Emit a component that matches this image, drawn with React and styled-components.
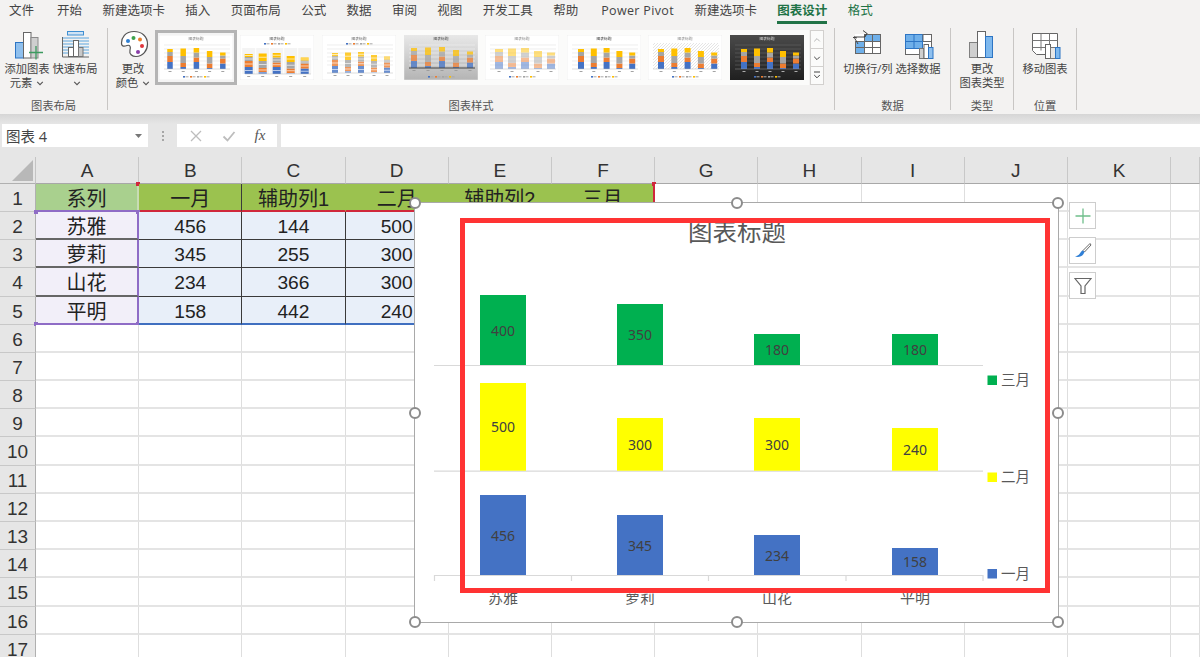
import styled, { createGlobalStyle } from "styled-components";

const uiFont = `"Open Sans", "Noto Sans CJK SC", sans-serif`;
const sheetFont = `"Liberation Sans", "Noto Sans CJK SC", sans-serif`;

const GlobalStyle = createGlobalStyle`
    html, body {
        margin: 0;
        padding: 0;
        background: #fff;
        overflow: hidden;
    }
`;

const Page = styled.div`
    width: 1200px;
    height: 657px;
    overflow: hidden;
    display: flex;
    flex-direction: column;
    font-family: ${uiFont};
    background: #f3f2f1;
`;

const TabBar = styled.div`
    height: 22px;
    flex: none;
    display: flex;
    gap: 20.4px;
    padding-left: 9px;
    box-sizing: border-box;
`;

const Tab = styled.div`
    position: relative;
    font-size: 12.5px;
    line-height: 21px;
    white-space: nowrap;
    color: ${(p) => (p.$green ? "#217346" : "#444")};
    font-weight: ${(p) => (p.$active ? 700 : 400)};
    letter-spacing: ${(p) => (p.$latin ? "0.35px" : "0")};
    &:first-child {
        margin-right: 2.6px;
    }
    &:nth-child(11) {
        margin-right: 2.6px;
    }
    ${(p) =>
        p.$active &&
        `&::after {
            content: "";
            position: absolute;
            left: 0;
            right: 0;
            bottom: -2px;
            height: 3px;
            background: #217346;
        }`}
`;

const Ribbon = styled.div`
    height: 92px;
    flex: none;
    display: flex;
`;

const Group = styled.div`
    width: ${(p) => p.$width}px;
    flex: none;
    display: flex;
    flex-direction: column;
    box-sizing: border-box;
`;

const GroupBody = styled.div`
    flex: 1;
    display: flex;
    padding-left: ${(p) => p.$pad || 0}px;
`;

const GroupLabel = styled.div`
    height: 16px;
    font-size: 11.3px;
    line-height: 16px;
    text-align: center;
    color: #555;
`;

const Separator = styled.div`
    width: 1px;
    flex: none;
    margin: 6px 0 4px;
    background: #c8c6c4;
`;

const RibbonButton = styled.div`
    width: ${(p) => p.$width}px;
    flex: none;
    padding-top: 8px;
    display: flex;
    flex-direction: column;
    align-items: center;
    font-size: 11.3px;
    line-height: 14px;
    color: #444;
    white-space: nowrap;
    svg.icon {
        display: block;
        margin-bottom: 2px;
    }
`;

const Gallery = styled.div`
    width: 654px;
    height: 55px;
    margin-top: 8px;
    flex: none;
    display: flex;
    background: #fbfbfa;
`;

const GallerySlot = styled.div`
    width: 81.6px;
    flex: none;
    display: flex;
    align-items: center;
    justify-content: center;
    box-sizing: border-box;
    svg {
        filter: blur(0.35px);
    }
    ${(p) => p.$selected && "border: 3px solid #b4b4b4; background: #f4f4f4;"}
`;

const ScrollColumn = styled.div`
    width: 14px;
    margin: 8px 0 0 1px;
    height: 55px;
    flex: none;
    display: flex;
    flex-direction: column;
    border: 1px solid #d2d0ce;
    box-sizing: border-box;
    background: #fbfbfa;
`;

const ScrollButton = styled.div`
    flex: 1;
    display: flex;
    align-items: center;
    justify-content: center;
    color: ${(p) => (p.$muted ? "#b5b5b5" : "#444")};
    & + & {
        border-top: 1px solid #d2d0ce;
    }
`;

const FormulaBar = styled.div`
    height: 43px;
    flex: none;
    display: flex;
    align-items: flex-start;
    box-sizing: border-box;
    padding: 10px 0 0 2px;
    background: linear-gradient(#d6d6d6 0, #e6e6e6 10px);
`;

const NameBox = styled.div`
    width: 146px;
    height: 23px;
    box-sizing: border-box;
    padding: 0 6px 0 4px;
    display: flex;
    align-items: center;
    justify-content: space-between;
    background: #fff;
    font-size: 14.5px;
    color: #444;
`;

const Dots = styled.div`
    width: 29px;
    height: 23px;
    flex: none;
    display: flex;
    flex-direction: column;
    align-items: center;
    justify-content: center;
    gap: 2px;
    span {
        width: 2px;
        height: 2px;
        background: #a6a6a6;
    }
`;

const FormulaButtons = styled.div`
    width: 100px;
    height: 23px;
    flex: none;
    display: flex;
    align-items: center;
    justify-content: space-around;
    padding: 0 2px;
    box-sizing: border-box;
    background: #fff;
`;

const Fx = styled.span`
    font-family: "Liberation Serif", serif;
    font-style: italic;
    font-size: 15px;
    color: #555;
`;

const FormulaInput = styled.div`
    flex: 1;
    height: 23px;
    margin-left: 4px;
    background: #fff;
`;

const Sheet = styled.div`
    position: relative;
    flex: 1;
    overflow: hidden;
    background: #fff;
    display: grid;
    grid-template-columns: 36px repeat(11, 103.2px) 1fr;
    grid-template-rows: 26.8px repeat(17, 28.2px);
    font-family: ${sheetFont};
`;

const CornerCell = styled.div`
    background: #e6e6e6;
    border-right: 1px solid #c4c4c4;
    border-bottom: 1px solid #b0b0b0;
    box-sizing: border-box;
    position: relative;
    &::after {
        content: "";
        position: absolute;
        left: 12px;
        top: 3px;
        width: 21px;
        height: 21px;
        background: #b8b8b8;
        clip-path: polygon(100% 0, 100% 100%, 0 100%);
    }
`;

const ColHeader = styled.div`
    background: #e6e6e6;
    border-right: 1px solid #c8c8c8;
    border-bottom: 1px solid #a8a8a8;
    box-sizing: border-box;
    font-size: 19px;
    line-height: 28px;
    text-align: center;
    color: #333;
`;

const RowHeader = styled.div`
    background: #e6e6e6;
    border-right: 1px solid #b0b0b0;
    border-bottom: 1px solid #c8c8c8;
    box-sizing: border-box;
    font-size: 19px;
    line-height: 30px;
    text-align: center;
    color: #333;
`;

const Cell = styled.div`
    position: relative;
    box-sizing: border-box;
    background: ${(p) => p.$bg || "#fff"};
    border-right: ${(p) => p.$right || "1px solid #dedede"};
    border-bottom: ${(p) => p.$bottom || "2px solid #e4e4e4"};
    font-size: ${(p) => (p.$cjk ? 20 : 19.2)}px;
    line-height: 30.5px;
    text-align: center;
    white-space: nowrap;
    color: #222;
`;

const Mark = styled.span`
    position: absolute;
    width: 4px;
    height: 4px;
    background: ${(p) => p.$color};
    ${(p) => (p.$atLeft ? "left: -2px;" : "right: -3px;")}
    ${(p) => (p.$atTop ? "top: -2px;" : "bottom: -3px;")}
`;

const ChartFrame = styled.div`
    position: absolute;
    left: 415px;
    top: 46px;
    width: 643px;
    height: 419px;
    box-sizing: border-box;
    background: #fff;
    outline: 1.5px solid #a9a9a9;
    svg {
        display: block;
    }
`;

const Annotation = styled.div`
    position: absolute;
    left: 45px;
    top: 15px;
    width: 590px;
    height: 375px;
    box-sizing: border-box;
    border: 5px solid #ff3333;
`;

const Handle = styled.span`
    position: absolute;
    width: 12px;
    height: 12px;
    margin: -6px 0 0 -6px;
    box-sizing: border-box;
    border-radius: 50%;
    background: #fff;
    border: 2px solid #8c8c8c;
    left: ${(p) => p.$x}%;
    top: ${(p) => p.$y}%;
`;

const SideButtons = styled.div`
    position: absolute;
    left: 1069px;
    top: 45px;
    display: flex;
    flex-direction: column;
    gap: 8px;
`;

const SideButton = styled.div`
    width: 27px;
    height: 27px;
    box-sizing: border-box;
    background: #fff;
    border: 1px solid #cdcdcd;
    display: flex;
    align-items: center;
    justify-content: center;
`;

function Caret({ size = 8, color = "#555" }) {
    return (
        <svg width={size} height={size} viewBox="0 0 8 8" style={{ marginLeft: 4 }}>
            <path d="M1.2 2.8 4 5.6l2.8-2.8" fill="none" stroke={color} strokeWidth="1.1" />
        </svg>
    );
}

function AddChartIcon() {
    return (
        <svg className="icon" width="48" height="30" viewBox="3 30 48 30">
            <rect x="15.5" y="42.5" width="8" height="15.5" fill="#8fc0ee" stroke="#2d75c4" />
            <rect x="23.5" y="32.5" width="7.5" height="25.5" fill="#fff" stroke="#666" />
            <rect x="31" y="37.5" width="7" height="20.5" fill="#cfcfcf" stroke="#8a8a8a" />
            <path d="M36 46v13.5M29 52.5h14" stroke="#3c9a5f" strokeWidth="1.3" />
        </svg>
    );
}

function QuickLayoutIcon() {
    return (
        <svg className="icon" width="48" height="30" viewBox="51 30 48 30">
            <rect x="67.5" y="31.5" width="16" height="3.5" fill="#cfe3f5" stroke="#3f8fd2" />
            {[38, 41, 44, 47, 50, 53].map((y) => (
                <path key={y} d={`M63 ${y}h26`} stroke="#5aa5de" strokeWidth="1" />
            ))}
            <path d="M62.5 37v20H89" fill="none" stroke="#666" />
            <rect x="68.5" y="47.5" width="5" height="9" fill="#fff" stroke="#666" />
            <rect x="73.5" y="40.5" width="5" height="16" fill="#fff" stroke="#666" />
            <rect x="78.5" y="47.5" width="4.5" height="9" fill="#c8c8c8" stroke="#777" />
        </svg>
    );
}

function PaletteIcon() {
    return (
        <svg className="icon" width="44" height="30" viewBox="111 30 44 30">
            <path
                d="M134 31.5C125 31.5 121.5 38 121.5 43c0 4 3 3.5 5.5 2.5 3-1 4 1.5 3 4.5-1 4 2 6.5 6 6.5 7 0 11.5-6 11.5-12.5 0-7.5-5.5-12.5-13.5-12.5Z"
                fill="#fff"
                stroke="#555"
                strokeWidth="1.2"
            />
            <circle cx="128" cy="41" r="2" fill="#2d7fd3" />
            <circle cx="133.5" cy="38" r="2" fill="#3fa34d" />
            <circle cx="140" cy="39.5" r="2" fill="#e8802c" />
            <circle cx="142" cy="46" r="2" fill="#e0353c" />
            <circle cx="138" cy="52" r="2" fill="#8a3fa8" />
        </svg>
    );
}

function SwitchRowColIcon() {
    return (
        <svg className="icon" width="50" height="30" viewBox="843 30 50 30">
            <rect x="855" y="34" width="26" height="20" fill="#fff" />
            <rect x="864" y="34" width="17" height="7" fill="#6fb0ea" />
            <rect x="855" y="41" width="9" height="13" fill="#6fb0ea" />
            <path
                d="M855.5 41.5h25M855.5 47.5h25M864.5 34v20M872.5 34v20M880.5 34v20M855.5 41v13M855 53.5h26M864 34.5h17"
                fill="none"
                stroke="#666"
            />
            <path d="M854 37h11l2-3.5M863 30.5l4 3-3 3.5M858 44l-4-7-1 1M854 37l3 1" fill="none" stroke="#444" strokeWidth="1" />
        </svg>
    );
}

function SelectDataIcon() {
    return (
        <svg className="icon" width="50" height="30" viewBox="893 30 50 30">
            <rect x="905.5" y="34.5" width="26" height="20" fill="#fff" stroke="#666" />
            <rect x="905.5" y="34.5" width="17" height="14" fill="#6fb0ea" stroke="#2d75c4" />
            <path d="M914 34v14M905.5 41.5h17" stroke="#2d75c4" />
            <path d="M923 41.5h9M923 34v7" stroke="#666" />
            <rect x="919.5" y="48.5" width="4.5" height="10" fill="#cfcfcf" stroke="#777" />
            <rect x="924" y="44.5" width="4.5" height="14" fill="#fff" stroke="#666" />
            <rect x="928.5" y="47.5" width="4.5" height="11" fill="#8fc0ee" stroke="#2d75c4" />
        </svg>
    );
}

function ChartTypeIcon() {
    return (
        <svg className="icon" width="62" height="30" viewBox="951 30 62 30">
            <rect x="969.5" y="42.5" width="8" height="15" fill="#cfcfcf" stroke="#808080" />
            <rect x="977.5" y="31.5" width="8" height="26" fill="#fff" stroke="#666" />
            <rect x="985.5" y="36.5" width="7" height="21" fill="#7db8ee" stroke="#2d75c4" />
        </svg>
    );
}

function MoveChartIcon() {
    return (
        <svg className="icon" width="62" height="30" viewBox="1014 30 62 30">
            <path d="M1032.5 33.5h25v21h-21l-4-4Z" fill="#fff" stroke="#666" />
            <path d="M1032.5 40.5h25M1032.5 47.5h25M1041 33.5v17M1049.5 33.5v12" stroke="#777" />
            <rect x="1045.5" y="44.5" width="5" height="14" fill="#fff" stroke="#666" />
            <rect x="1050.5" y="47.5" width="5" height="11" fill="#e6e6e6" stroke="#777" />
            <rect x="1055.5" y="47.5" width="4.5" height="11" fill="#7db8ee" stroke="#2d75c4" />
        </svg>
    );
}

const thumbStacks = [
    [7, 6, 4, 3],
    [2, 4, 7, 7.5],
    [7, 4.5, 5, 4.5],
    [1, 4.5, 6.5, 6],
    [5.5, 5, 3, 3],
];
const stackColors = ["#4472c4", "#ed7d31", "#a5a5a5", "#ffc000"];

const thumbStyles = [
    { grid: true, legend: 41, barWidth: 5.5, start: 11, step: 13.2, base: 34, titleColor: "#777" },
    { legend: 8, barWidth: 8, start: 8.7, step: 14, base: 39, panels: true, stripes: true, titleColor: "#555" },
    { grid: true, legend: 8, barWidth: 6, start: 13, step: 13, base: 38, stripes: true, pale: 0.8, titleColor: "#666" },
    { grid: true, legend: 41, barWidth: 6, start: 10, step: 14, base: 33, gray: true, pale: 0.75, axis: "#444", titleColor: "#444" },
    { grid: true, legend: 41, barWidth: 8, start: 14, step: 13, base: 34, pale: 0.5, titleColor: "#888" },
    { grid: true, legend: 41, barWidth: 6, start: 14, step: 12.8, base: 34, titleColor: "#333" },
    { legend: 41, barWidth: 6, start: 13, step: 13.3, base: 34, hatch: true, titleColor: "#888" },
    { grid: true, legend: 41, barWidth: 6, start: 14, step: 13, base: 34, dark: true, titleColor: "#ddd" },
];

function ChartThumb({ index }) {
    const look = thumbStyles[index];
    const bg = look.dark ? "url(#thumb-dark)" : look.gray ? "url(#thumb-gray)" : "#fff";
    const gridColor = look.dark ? "#666" : look.gray ? "#f2f2f2" : "#e3e3e3";

    return (
        <svg width="74" height="45" viewBox="0 0 74 45">
            <defs>
                <linearGradient id="thumb-dark" x1="0" y1="0" x2="0" y2="1">
                    <stop offset="0" stopColor="#4a4a4a" />
                    <stop offset="1" stopColor="#1f1f1f" />
                </linearGradient>
                <linearGradient id="thumb-gray" x1="0" y1="0" x2="0" y2="1">
                    <stop offset="0" stopColor="#e8e8e8" />
                    <stop offset="1" stopColor="#b4b4b4" />
                </linearGradient>
                <pattern id="thumb-hatch" width="3" height="3" patternUnits="userSpaceOnUse">
                    <rect width="3" height="3" fill="#fff" />
                    <path d="M0 3 3 0" stroke="#d4d4d4" strokeWidth="0.6" />
                </pattern>
            </defs>
            <rect width="74" height="45" fill={bg} stroke={look.dark ? "none" : "#e8e8e8"} strokeWidth="0.6" />
            {look.hatch && <rect x="5" y="8" width="66" height="26" fill="url(#thumb-hatch)" />}
            <text x="37" y="5" fontSize="3.8" textAnchor="middle" fill={look.titleColor} fontFamily={uiFont}>
                图表标题
            </text>
            {look.grid &&
                [10, 14, 18, 22, 26, 30].map((y) => <path key={y} d={`M5 ${y}h66`} stroke={gridColor} strokeWidth="0.6" />)}
            {thumbStacks.map((stack, col) => {
                const cx = look.start + col * look.step;
                let y = look.base;
                return (
                    <g key={col} opacity={look.pale || 1}>
                        {look.panels && <rect x={cx - 6.5} y="13" width="13" height="26" fill="#f4f4f4" />}
                        {stack.map((h, i) => {
                            y -= h;
                            return (
                                <g key={i}>
                                    <rect x={cx - look.barWidth / 2} y={y} width={look.barWidth} height={h} fill={stackColors[i]} />
                                    {look.stripes && (
                                        <path d={`M${cx - look.barWidth / 2} ${y + h / 2}h${look.barWidth}`} stroke="#fff" strokeWidth="0.8" opacity="0.8" />
                                    )}
                                </g>
                            );
                        })}
                    </g>
                );
            })}
            <path d={`M5 ${look.base}h66`} stroke={look.axis || (look.dark ? "#999" : "#bbb")} strokeWidth={look.axis ? 1 : 0.5} />
            {[0, 1, 2, 3, 4].map((col) => (
                <rect key={col} x={look.start - 1.5 + col * look.step} y={look.base + 2} width="3" height="0.9" fill={look.dark ? "#bbb" : "#999"} />
            ))}
            {stackColors.map((color, i) => (
                <g key={color}>
                    <rect x={24 + i * 7} y={look.legend} width="2" height="1.6" fill={color} />
                    <rect x={26.5 + i * 7} y={look.legend + 0.3} width="3" height="1" fill="#aaa" />
                </g>
            ))}
        </svg>
    );
}

const categories = ["苏雅", "萝莉", "山花", "平明"];
const barX = [480, 617, 754, 892];

const chartSeries = [
    { name: "三月", color: "#00b050", base: 365, tops: [295, 304, 334, 334], values: [400, 350, 180, 180], legendY: 380 },
    { name: "二月", color: "#ffff00", base: 470.7, tops: [383, 418, 418, 428], values: [500, 300, 300, 240], legendY: 477 },
    { name: "一月", color: "#4472c4", base: 575, tops: [495, 515, 535, 548], values: [456, 345, 234, 158], legendY: 573.5 },
];

function StackedChart() {
    return (
        <svg width="643" height="419" viewBox="415 203 643 419">
            <text x="737" y="241" fontSize="24.5" textAnchor="middle" fill="#595959" fontFamily={uiFont}>
                图表标题
            </text>
            {chartSeries.map((series) => (
                <g key={series.name}>
                    <path d={`M434 ${series.base + 0.5}H983`} stroke="#d9d9d9" strokeWidth="1.2" />
                    {series.values.map((value, i) => (
                        <g key={i}>
                            <rect x={barX[i]} y={series.tops[i]} width="46" height={series.base - series.tops[i]} fill={series.color} />
                            <text
                                x={barX[i] + 23}
                                y={(series.tops[i] + series.base) / 2 + 5.5}
                                fontSize="14"
                                textAnchor="middle"
                                fill="#404040"
                                fontFamily={`"Noto Sans", sans-serif`}
                            >
                                {value}
                            </text>
                        </g>
                    ))}
                    <rect x="987.5" y={series.legendY - 4.5} width="9.5" height="9.5" fill={series.color} />
                    <text x="1001" y={series.legendY + 5} fontSize="14.5" fill="#595959" fontFamily={uiFont}>
                        {series.name}
                    </text>
                </g>
            ))}
            <path d="M434.5 575v6M571.5 575v6M708.5 575v6M846 575v6M983 575v6" stroke="#d9d9d9" strokeWidth="1.2" />
            {categories.map((name, i) => (
                <text key={name} x={barX[i] + 23} y="603" fontSize="15" textAnchor="middle" fill="#595959" fontFamily={uiFont}>
                    {name}
                </text>
            ))}
        </svg>
    );
}

const handles = [
    [0, 0],
    [50, 0],
    [100, 0],
    [0, 50],
    [100, 50],
    [0, 100],
    [50, 100],
    [100, 100],
];

const tabs = ["文件", "开始", "新建选项卡", "插入", "页面布局", "公式", "数据", "审阅", "视图", "开发工具", "帮助", "Power Pivot", "新建选项卡"];
const columns = ["A", "B", "C", "D", "E", "F", "G", "H", "I", "J", "K", ""];

const tableRows = [
    ["系列", "一月", "辅助列1", "二月", "辅助列2", "三月"],
    ["苏雅", 456, 144, 500, 100, 400],
    ["萝莉", 345, 255, 300, 300, 350],
    ["山花", 234, 366, 300, 300, 180],
    ["平明", 158, 442, 240, 360, 180],
];

const darkLine = "1px solid #3a3a3a";
const purple = "2px solid #8f6cc6";

function tableCell(row, col) {
    const value = tableRows[row][col];
    const props = { $cjk: typeof value === "string" };

    if (row === 0) {
        props.$bg = col === 0 ? "#a9d08e" : "#9bc24f";
        props.$bottom = col === 0 ? purple : "2px solid #d0283c";
        props.$right = col === 0 ? "2px solid #c8dcb4" : col === 1 ? darkLine : "1px solid #9bc24f";
        if (col === 5) props.$right = "2px solid #d0283c";
    } else if (col === 0) {
        props.$bg = "#f2eff9";
        props.$right = purple;
        props.$bottom = row === 4 ? purple : "2px solid #666";
    } else {
        props.$bg = "#e8eff9";
        props.$right = col < 3 ? darkLine : "1px solid #9fb0c8";
        props.$bottom = row === 4 ? "2px solid #3f6fc0" : darkLine;
    }
    return { value, props };
}

function SheetCells() {
    const rows = [];
    for (let row = 0; row < 17; row++) {
        rows.push(<RowHeader key={`h${row}`}>{row + 1}</RowHeader>);
        for (let col = 0; col < 12; col++) {
            const key = `${row}-${col}`;
            if (row < 5 && col < 6) {
                const { value, props } = tableCell(row, col);
                rows.push(
                    <Cell key={key} {...props}>
                        {value}
                        {row === 0 && col === 0 && <Mark $color="#d0283c" $atTop />}
                        {row === 0 && col === 5 && <Mark $color="#d0283c" $atTop />}
                        {row === 1 && col === 0 && <Mark $color="#8f6cc6" $atTop $atLeft />}
                        {row === 1 && col === 0 && <Mark $color="#8f6cc6" $atTop />}
                        {row === 4 && col === 0 && <Mark $color="#8f6cc6" $atLeft />}
                        {row === 4 && col === 0 && <Mark $color="#8f6cc6" />}
                    </Cell>
                );
            } else {
                rows.push(<Cell key={key} />);
            }
        }
    }
    return rows;
}

function App() {
    return (
        <>
            <GlobalStyle />
            <Page>
                <TabBar>
                    {tabs.map((tab, i) => (
                        <Tab key={i} $latin={tab === "Power Pivot"}>
                            {tab}
                        </Tab>
                    ))}
                    <Tab $green $active>
                        图表设计
                    </Tab>
                    <Tab $green>格式</Tab>
                </TabBar>

                <Ribbon>
                    <Group $width={107}>
                        <GroupBody $pad={3}>
                            <RibbonButton $width={48}>
                                <AddChartIcon />
                                添加图表
                                <span>
                                    元素
                                    <Caret />
                                </span>
                            </RibbonButton>
                            <RibbonButton $width={48}>
                                <QuickLayoutIcon />
                                快速布局
                                <span>
                                    <Caret />
                                </span>
                            </RibbonButton>
                        </GroupBody>
                        <GroupLabel>图表布局</GroupLabel>
                    </Group>
                    <Separator />
                    <Group $width={726}>
                        <GroupBody $pad={3}>
                            <RibbonButton $width={44}>
                                <PaletteIcon />
                                更改
                                <span>
                                    颜色
                                    <Caret />
                                </span>
                            </RibbonButton>
                            <Gallery>
                                {thumbStyles.map((_, i) => (
                                    <GallerySlot key={i} $selected={i === 0}>
                                        <ChartThumb index={i} />
                                    </GallerySlot>
                                ))}
                            </Gallery>
                            <ScrollColumn>
                                <ScrollButton $muted>
                                    <svg width="8" height="8" viewBox="0 0 8 8">
                                        <path d="M1.2 5.4 4 2.6l2.8 2.8" fill="none" stroke="currentColor" />
                                    </svg>
                                </ScrollButton>
                                <ScrollButton>
                                    <svg width="8" height="8" viewBox="0 0 8 8">
                                        <path d="M1.2 2.8 4 5.6l2.8-2.8" fill="none" stroke="currentColor" />
                                    </svg>
                                </ScrollButton>
                                <ScrollButton>
                                    <svg width="8" height="9" viewBox="0 0 8 9">
                                        <path d="M1 1h6M1.2 4 4 6.8 6.8 4" fill="none" stroke="currentColor" />
                                    </svg>
                                </ScrollButton>
                            </ScrollColumn>
                        </GroupBody>
                        <GroupLabel>图表样式</GroupLabel>
                    </Group>
                    <Separator />
                    <Group $width={115}>
                        <GroupBody $pad={8}>
                            <RibbonButton $width={50}>
                                <SwitchRowColIcon />
                                切换行/列
                            </RibbonButton>
                            <RibbonButton $width={50}>
                                <SelectDataIcon />
                                选择数据
                            </RibbonButton>
                        </GroupBody>
                        <GroupLabel>数据</GroupLabel>
                    </Group>
                    <Separator />
                    <Group $width={62}>
                        <GroupBody>
                            <RibbonButton $width={62}>
                                <ChartTypeIcon />
                                更改
                                <span>图表类型</span>
                            </RibbonButton>
                        </GroupBody>
                        <GroupLabel>类型</GroupLabel>
                    </Group>
                    <Separator />
                    <Group $width={62}>
                        <GroupBody>
                            <RibbonButton $width={62}>
                                <MoveChartIcon />
                                移动图表
                            </RibbonButton>
                        </GroupBody>
                        <GroupLabel>位置</GroupLabel>
                    </Group>
                    <Separator />
                </Ribbon>

                <FormulaBar>
                    <NameBox>
                        图表 4
                        <svg width="7" height="4" viewBox="0 0 7 4">
                            <path d="M0 0h7L3.5 4Z" fill="#777" />
                        </svg>
                    </NameBox>
                    <Dots>
                        <span />
                        <span />
                        <span />
                    </Dots>
                    <FormulaButtons>
                        <svg width="14" height="14" viewBox="0 0 14 14">
                            <path d="M2 2l10 10M12 2 2 12" stroke="#bdbdbd" strokeWidth="1.3" />
                        </svg>
                        <svg width="14" height="14" viewBox="0 0 14 14">
                            <path d="M1.5 7.5 5.5 11.5 12.5 3" fill="none" stroke="#bdbdbd" strokeWidth="1.8" />
                        </svg>
                        <Fx>fx</Fx>
                    </FormulaButtons>
                    <FormulaInput />
                </FormulaBar>

                <Sheet>
                    <CornerCell />
                    {columns.map((col, i) => (
                        <ColHeader key={i}>{col}</ColHeader>
                    ))}
                    <SheetCells />

                    <ChartFrame>
                        <StackedChart />
                        <Annotation />
                        {handles.map(([x, y]) => (
                            <Handle key={`${x}-${y}`} $x={x} $y={y} />
                        ))}
                    </ChartFrame>

                    <SideButtons>
                        <SideButton>
                            <svg width="18" height="18" viewBox="0 0 18 18">
                                <path d="M9 1.5v15M1.5 9h15" stroke="#6fbf8b" strokeWidth="1.3" />
                            </svg>
                        </SideButton>
                        <SideButton>
                            <svg width="18" height="18" viewBox="0 0 18 18">
                                <path d="M16 1.5 9 8.5l1.5 1.5L17 3Z" fill="#fff" stroke="#666" />
                                <path d="M9 8.5c-2 .5-2.5 2-3.5 3.5-.8 1.2-2.5 2-4.500 2.5 3 1 7.500.8 9.500-4.500Z" fill="#2f7fd6" />
                            </svg>
                        </SideButton>
                        <SideButton>
                            <svg width="18" height="18" viewBox="0 0 18 18">
                                <path d="M1 1.500h16L11 9v7.500H7V9Z" fill="#fff" stroke="#666" strokeWidth="1.2" />
                            </svg>
                        </SideButton>
                    </SideButtons>
                </Sheet>
            </Page>
        </>
    );
}

export default App;
